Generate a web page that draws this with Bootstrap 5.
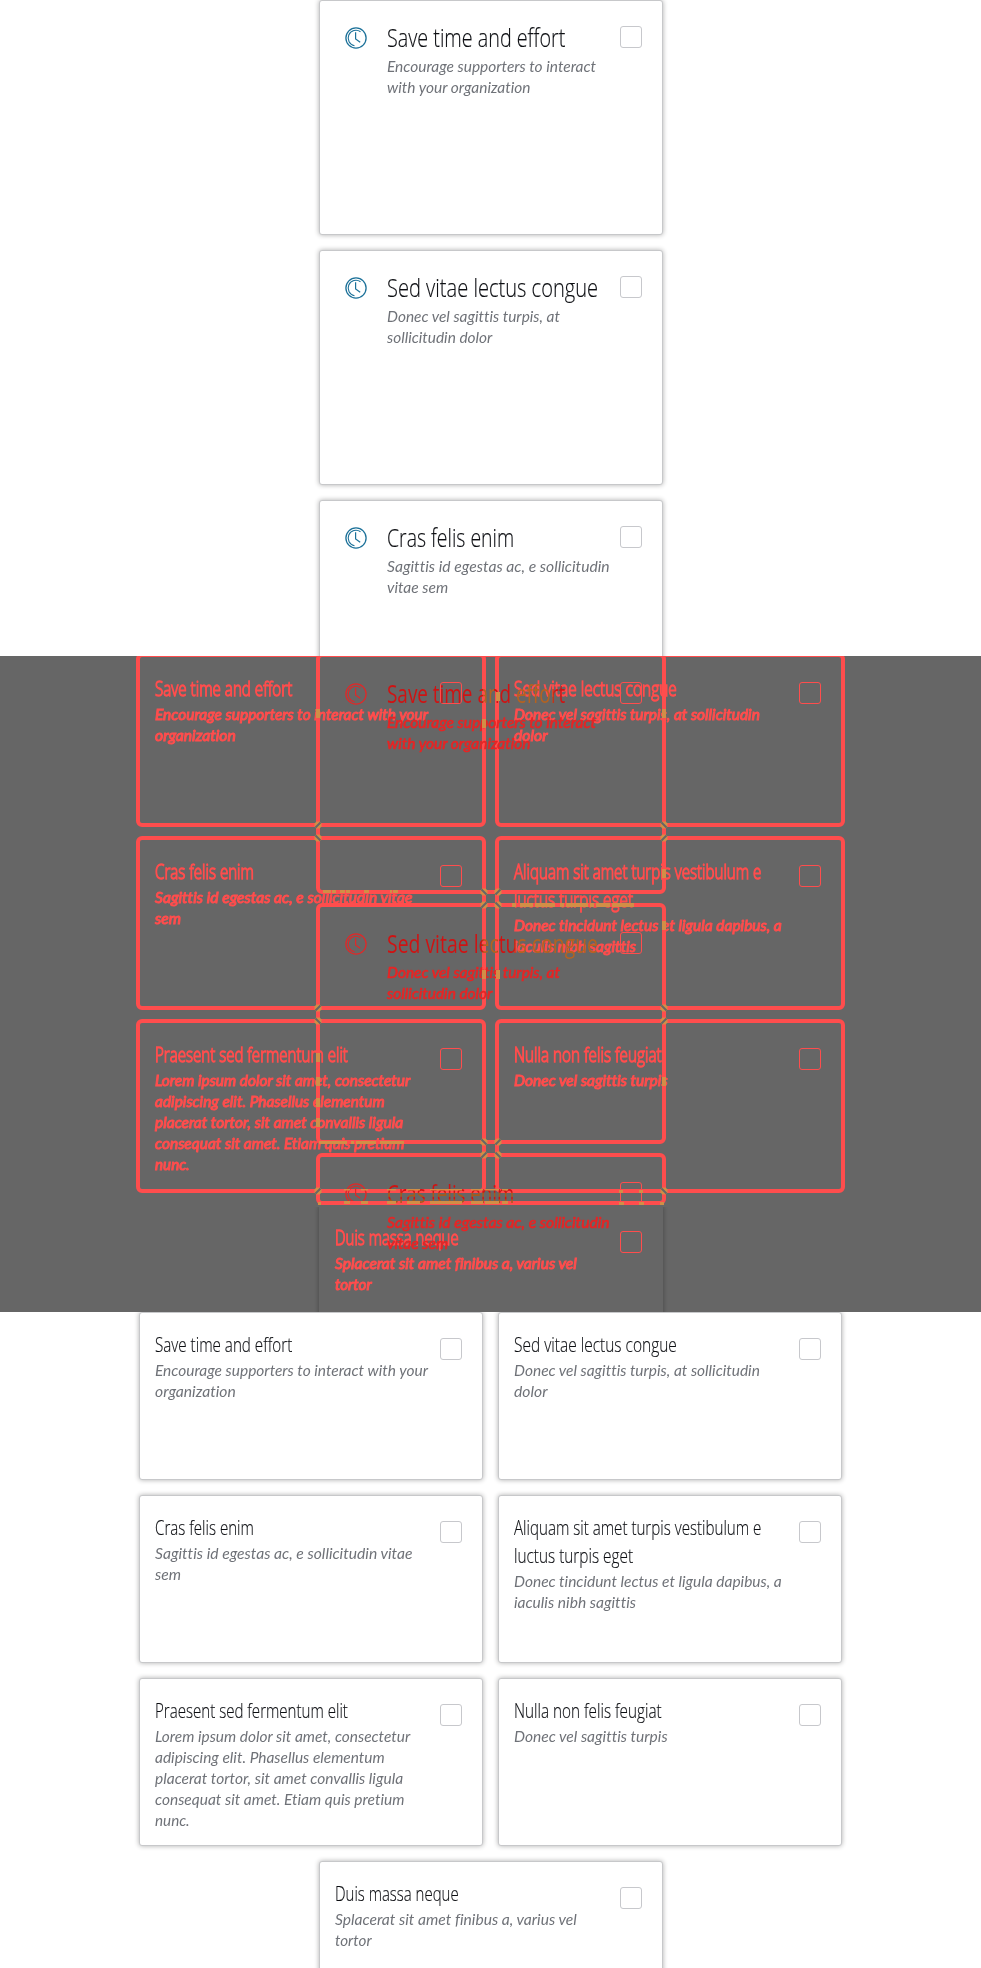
<!DOCTYPE html>
<html lang="en">
<head>
<meta charset="utf-8">
<meta name="viewport" content="width=device-width, initial-scale=1">
<title>Selectable cards</title>
<link href="https://cdn.jsdelivr.net/npm/bootstrap@5.3.0/dist/css/bootstrap.min.css" rel="stylesheet">
<style>
  body { background: #fff; font-family: "Lato", "Liberation Sans", sans-serif; }
  .pane { height: 656px; overflow: hidden; position: relative; }
  .pane-diff { background: #666; }
  .layer { position: absolute; inset: 0; }
  .grid { gap: 15px; width: 704px; padding-right: 1px; margin-left: 139px; }
  .grid.stack { width: 344px; padding: 0; margin-left: 319px; }
  .tile { width: 344px; height: 168px; background: #fff; border: 1px solid #c7c8ca; border-radius: 3px; box-shadow: 0 0 5px rgba(0,0,0,.32); padding: 18px 20px 0 15px; position: relative; }
  .grid:not(.stack) .tile:nth-child(7) { margin-left: 1px; }
  .stack .tile { height: 235px; padding: 19px 20px 0 25px; }
  .words { min-width: 0; flex: 1 1 0; }
  .tile .clock { width: 22px; height: 22px; margin: 7px 20px 0 0; color: #1c7199; flex: none; }
  .heading { font: 300 20px/28px "Open Sans", sans-serif; color: #0c0e12; margin: 0; white-space: nowrap; -webkit-text-stroke: .15px #0c0e12; }
  .stack .heading { font-size: 25px; line-height: 34px; padding-bottom: 2px; }
  .note { font: italic 400 15px/21px "Lato", sans-serif; color: #6f7278; margin: 0; padding-top: 1px; white-space: nowrap; font-variant-ligatures: none; }
  .stack .note { padding-top: 0; }
  .fit { display: inline-block; transform-origin: 0 50%; }
  .tick { appearance: none; display: block; width: 22px; height: 22px; margin: 7px 0 0; border: 1px solid #c7c8cc; border-radius: 3px; background: #fff; flex: none; }
  .stack .tick { margin-top: 6px; }
  /* comparison pane */
  .pane-diff .tile { background: none; border-color: transparent; box-shadow: none; }
  .pane-diff .tile::before { content: ""; position: absolute; inset: -4px; border: 4px solid #ff4d4d; border-radius: 6px; }
  .pane-diff .tick { background: none; border-color: #ff4d4d; position: relative; }
  .pane-diff .heading, .pane-diff .note { color: #ff4d4d; }
  .pane-diff .heading { -webkit-text-stroke: 1.3px #ff4d4d; }
  .pane-diff .note { -webkit-text-stroke: 1px #ff4d4d; }
  .pane-diff .stack .heading { color: #d01212; -webkit-text-stroke: .5px #d01212; }
  .pane-diff .stack .note { color: #e82424; -webkit-text-stroke: .6px #e82424; }
  .pane-diff .clock { color: #e02828; }
  .pane-diff .stack .tile:nth-child(3) { height: 46px; }
  .pane-diff .stack .tile:nth-child(-n+3) .heading .fit { color: transparent; -webkit-text-stroke: 0; font-weight: 400; -webkit-background-clip: text; background-clip: text; }
  .pane-diff .stack .tile:nth-child(1) .heading .fit { background-image: linear-gradient(90deg, #d01212 54%, #b5621f 54%, #b5621f 60%, #d01212 60%, #d01212 70%, #b5621f 72%, #b5621f 92%, #d01212 94%); }
  .pane-diff .stack .tile:nth-child(2) .heading .fit { background-image: linear-gradient(90deg, #d01212 45%, #b5621f 46%, #b5621f 52%, #d01212 53%, #d01212 60%, #b5621f 62%); }
  .pane-diff .stack .tile:nth-child(3) .heading .fit { background-image: linear-gradient(180deg, #d01212 48%, #a65a1a 50%, #a65a1a 60%, #d01212 62%, #d01212 68%, #a65a1a 70%); }
  .pane-diff .grid:not(.stack) .tile:nth-child(7)::before { display: none; }
  .pane-diff .grid:not(.stack) .tile:nth-child(7) { box-shadow: 0 0 5px rgba(0,0,0,.32); clip-path: inset(2px -6px 0 -6px); }
</style>
</head>
<body>
<main>
  <section class="pane"><div class="grid stack d-flex flex-column" data-set="stack"></div></section>
  <section class="pane pane-diff">
    <div class="layer"><div class="grid d-flex flex-wrap justify-content-center" data-set="pairs"></div></div>
    <div class="layer"><div class="grid stack d-flex flex-column" data-set="stack"></div></div>
    <svg class="layer" id="overlaps" width="981" height="656" viewBox="0 0 981 656"></svg>
  </section>
  <section class="pane"><div class="grid d-flex flex-wrap justify-content-center" data-set="pairs"></div></section>
</main>
<script src="https://cdn.jsdelivr.net/npm/bootstrap@5.3.0/dist/js/bootstrap.bundle.min.js"></script>
<script>
  // Each line: [text, drawn width]
  const sets = {
    stack: [
      [[['Save time and effort', 178.5]], [['Encourage supporters to interact', 209.5], ['with your organization', 143.5]]],
      [[['Sed vitae lectus congue', 211]], [['Donec vel sagittis turpis, at', 173], ['sollicitudin dolor', 105]]],
      [[['Cras felis enim', 127.5]], [['Sagittis id egestas ac, e sollicitudin', 222.5], ['vitae sem', 61]]]
    ],
    pairs: [
      [[['Save time and effort', 137.5]], [['Encourage supporters to interact with your', 272.5], ['organization', 80.5]]],
      [[['Sed vitae lectus congue', 162.5]], [['Donec vel sagittis turpis, at sollicitudin', 245.5], ['dolor', 33.5]]],
      [[['Cras felis enim', 99]], [['Sagittis id egestas ac, e sollicitudin vitae', 257.5], ['sem', 26]]],
      [[['Aliquam sit amet turpis vestibulum e', 247.5], ['luctus turpis eget', 119]], [['Donec tincidunt lectus et ligula dapibus, a', 267.5], ['iaculis nibh sagittis', 121.5]]],
      [[['Praesent sed fermentum elit', 193]], [['Lorem ipsum dolor sit amet, consectetur', 255.5], ['adipiscing elit. Phasellus elementum', 230], ['placerat tortor, sit amet convallis ligula', 248.5], ['consequat sit amet. Etiam quis pretium', 249], ['nunc.', 34.5]]],
      [[['Nulla non felis feugiat', 147.5]], [['Donec vel sagittis turpis', 153.5]]],
      [[['Duis massa neque', 123.5]], [['Splacerat sit amet finibus a, varius vel', 241.5], ['tortor', 36.5]]]
    ]
  };
  const clock = '<svg class="clock" viewBox="0 0 22 22" fill="none" stroke="currentColor"><circle cx="11" cy="11" r="10.1" stroke-width="1.3"/><path d="M15.5 4.7A7.8 7.8 0 1 0 9.5 18.7" stroke-width="1.1"/><path d="M10.6 5.2V12l4.6 3.2" stroke-width="1.2"/></svg>';
  const lines = list => list.map(([t, w]) => `<div><span class="fit" data-w="${w}">${t}</span></div>`).join('');
  document.querySelectorAll('[data-set]').forEach(grid => {
    const key = grid.dataset.set;
    grid.innerHTML = sets[key].map(([h, n]) => `<article class="tile d-flex">${key === 'stack' ? clock : ''}<div class="words"><div class="heading">${lines(h)}</div><div class="note">${lines(n)}</div></div><input type="checkbox" class="tick" aria-label="${h[0][0]}"></article>`).join('');
  });
  document.querySelectorAll('.fit').forEach(el => {
    el.style.transform = `scaleX(${el.dataset.w / el.offsetWidth})`;
  });
  // Marks where the outlines and texts of the two layouts meet
  const tan = '#d28e46';
  let marks = '';
  const cross = (x, y, d) => {
    marks += `<path d="M${x-3.5} ${y-1.5}l2-2h3l2 2v3l-2 2h-3l-2-2z" fill="${tan}"/><path d="M${x-2.5} ${y-2.5*d}L${x+2.5} ${y+2.5*d}" stroke="#666" stroke-width="2"/>`;
  };
  [[169,-1],[182,1],[352,-1],[365,1],[535,-1]].forEach(([y, d]) => { cross(318, y, d); cross(664, y, -d); });
  [[236,1],[249,-1],[486,1],[499,-1]].forEach(([y, d]) => { cross(484, y, d); cross(498, y, -d); });
  const bar = (x, y, w, h) => marks += `<rect x="${x}" y="${y}" width="${w}" height="${h}" fill="${tan}"/>`;
  [[323,8],[332,4],[340,5],[346,4],[364,5],[390,2],[393,5]].forEach(([x, w]) => bar(x, 234, w, 3));
  [[512,4],[520,13],[535,20],[560,4],[566,22],[590,4],[596,14],[612,22]].forEach(([x, w]) => bar(x, 247, w, 4));
  [[319,28],[351,3],[356,20],[380,24]].forEach(([x, w]) => bar(x, 485, w, 3));
  [[344,6],[361,7],[387,9],[407,13],[430,32],[471,12],[485,14],[502,6]].forEach(([x, w]) => { bar(x, 533, w, 1.5); bar(x, 545, w, 3); });
  [[318,3],[619,5],[639,5],[660,4]].forEach(([x, w]) => bar(x, 546, w, 3));
  [[619,534],[639,534]].forEach(([x, y]) => bar(x, y, 4, 3));
  [[318,57],[318,401],[318,425],[318,446],[318,466],[664,57],[664,217],[664,269],[664,425],[484,67],[498,40],[484,318],[498,318]].forEach(([x, y]) => bar(x-2, y-4, 4, 9));
  document.getElementById('overlaps').innerHTML = marks;
</script>
</body>
</html>
